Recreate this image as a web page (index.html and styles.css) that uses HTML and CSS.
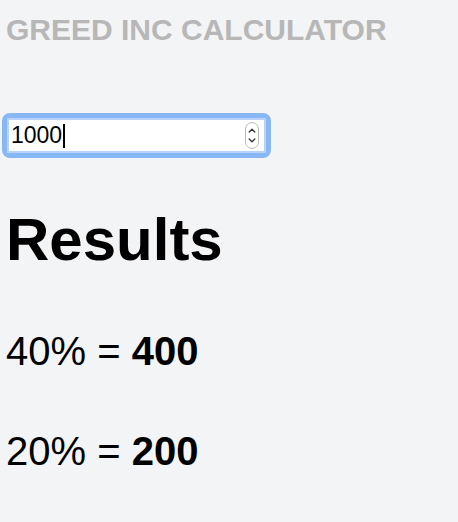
FILE: index.html
```html
<!DOCTYPE html>
<html>
<head>
<meta charset="utf-8">
<link rel="stylesheet" href="styles.css">
</head>
<body>
<main class="page">
  <h1 class="title">GREED INC CALCULATOR</h1>
  <div class="field">
    <div class="field-inner">
      <span class="value">1000</span><span class="caret"></span>
      <span class="spinner">
        <svg width="14" height="27" viewBox="0 0 14 27">
          <rect x="0.5" y="0.5" width="13" height="26" rx="6.5" fill="#fff" stroke="#b9b9b9"/>
          <path d="M4.2 10 L7 7.2 L9.8 10" fill="none" stroke="#333" stroke-width="1.3" stroke-linecap="round" stroke-linejoin="round"/>
          <path d="M4.2 17 L7 19.8 L9.8 17" fill="none" stroke="#333" stroke-width="1.3" stroke-linecap="round" stroke-linejoin="round"/>
        </svg>
      </span>
    </div>
  </div>
  <h2 class="results">Results</h2>
  <p class="line">40% = <b>400</b></p>
  <p class="line">20% = <b>200</b></p>
</main>
</body>
</html>
```

FILE: styles.css
```css
html, body {
  margin: 0;
  padding: 0;
  background: #f3f4f6;
}
.page {
  font-family: "Liberation Sans", Arial, sans-serif;
  color: #000;
  padding: 13px 0 0 6px;
  display: flex;
  flex-direction: column;
  align-items: flex-start;
}
.title {
  margin: 0;
  font-size: 30px;
  line-height: 34px;
  font-weight: 700;
  color: #b7b7b7;
}
.field {
  margin: 66px 0 0 -4px;
  width: 269px;
  box-sizing: border-box;
  border: 5px solid #88b7f6;
  border-radius: 8px;
}
.field-inner {
  display: flex;
  align-items: center;
  height: 31px;
  background: #fff;
  border: 2px solid #b9d3f8;
  padding: 0 0 0 2px;
  font-family: "Liberation Sans", Arial, sans-serif;
  font-size: 23px;
  color: #000;
}
.value {
  line-height: 31px;
}
.caret {
  width: 2px;
  height: 24px;
  background: #000;
  margin-left: 1px;
}
.spinner {
  margin-left: auto;
  margin-right: 5px;
  display: flex;
}
.results {
  margin: 48px 0 0 0;
  font-size: 60px;
  line-height: 68px;
  font-weight: 700;
}
.line {
  margin: 54px 0 0 0;
  font-size: 40px;
  line-height: 46px;
}
.line + .line {
  margin-top: 54px;
}
.line b {
  font-weight: 700;
}
```
